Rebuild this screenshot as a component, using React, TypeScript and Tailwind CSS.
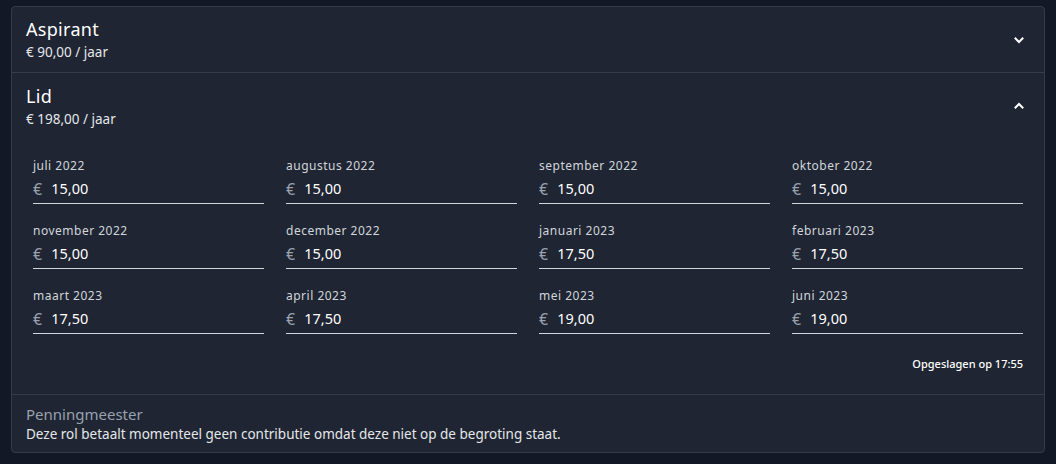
import { useState } from "react";

const months = [
  { label: "juli 2022", value: "15,00" },
  { label: "augustus 2022", value: "15,00" },
  { label: "september 2022", value: "15,00" },
  { label: "oktober 2022", value: "15,00" },
  { label: "november 2022", value: "15,00" },
  { label: "december 2022", value: "15,00" },
  { label: "januari 2023", value: "17,50" },
  { label: "februari 2023", value: "17,50" },
  { label: "maart 2023", value: "17,50" },
  { label: "april 2023", value: "17,50" },
  { label: "mei 2023", value: "19,00" },
  { label: "juni 2023", value: "19,00" },
];

function Chevron({ up }: { up?: boolean }) {
  return (
    <svg className="w-3 h-3 text-white" viewBox="0 0 12 12" fill="none" stroke="currentColor">
      <path
        strokeWidth={2}
        strokeLinecap="square"
        d={up ? "M2.5 7.5L6 4l3.5 3.5" : "M2.5 4.5L6 8l3.5-3.5"}
      />
    </svg>
  );
}

export default function App() {
  const [values, setValues] = useState(months.map((m) => m.value));

  return (
    <div
      className="w-[1056px] h-[464px] bg-[#121826] pt-[6px] px-[11px]"
      style={{ fontFamily: "'Noto Sans', sans-serif" }}
    >
      <div className="border border-[#353b49] rounded bg-[#1f2532] text-white">
        {/* Aspirant */}
        <div className="flex items-center justify-between h-[66px] pl-[14px] pr-[19px] border-b border-[#353b49]">
          <div>
            <div className="text-[18px] leading-[22px] tracking-[0.3px]">Aspirant</div>
            <div className="text-[13.5px] leading-[18px] mt-[3px] text-gray-200">€ 90,00 / jaar</div>
          </div>
          <Chevron />
        </div>

        {/* Lid */}
        <div className="border-b border-[#353b49]">
          <div className="flex items-center justify-between h-[66px] pl-[14px] pr-[19px]">
            <div>
              <div className="text-[18px] leading-[22px] tracking-[0.3px]">Lid</div>
              <div className="text-[13.5px] leading-[18px] mt-[3px] text-gray-200">€ 198,00 / jaar</div>
            </div>
            <Chevron up />
          </div>

          <div className="px-[21px] pt-[20px] pb-[23px]">
            <div className="grid grid-cols-4 gap-x-[22px] gap-y-[20px]">
              {months.map((m, i) => (
                <label key={m.label} className="block">
                  <div className="text-[12px] leading-[14px] tracking-[0.5px] text-gray-300">{m.label}</div>
                  <div className="flex items-center gap-[9px] h-[29px] border-b border-gray-300 mt-[2px]">
                    <span className="text-[16px] text-gray-400">€</span>
                    <input
                      value={values[i]}
                      onChange={(e) => {
                        const next = [...values];
                        next[i] = e.target.value;
                        setValues(next);
                      }}
                      className="bg-transparent outline-none text-[14.5px] text-white w-full"
                    />
                  </div>
                </label>
              ))}
            </div>
            <div className="text-right text-[11px] leading-[15px] font-medium mt-[22px]">Opgeslagen op 17:55</div>
          </div>
        </div>

        {/* Penningmeester */}
        <div className="pl-[14px] pt-[9px] pb-[8px]">
          <div className="text-[15px] leading-[20px] text-gray-400">Penningmeester</div>
          <div className="text-[13.5px] leading-[20px] text-gray-200">
            Deze rol betaalt momenteel geen contributie omdat deze niet op de begroting staat.
          </div>
        </div>
      </div>
    </div>
  );
}
